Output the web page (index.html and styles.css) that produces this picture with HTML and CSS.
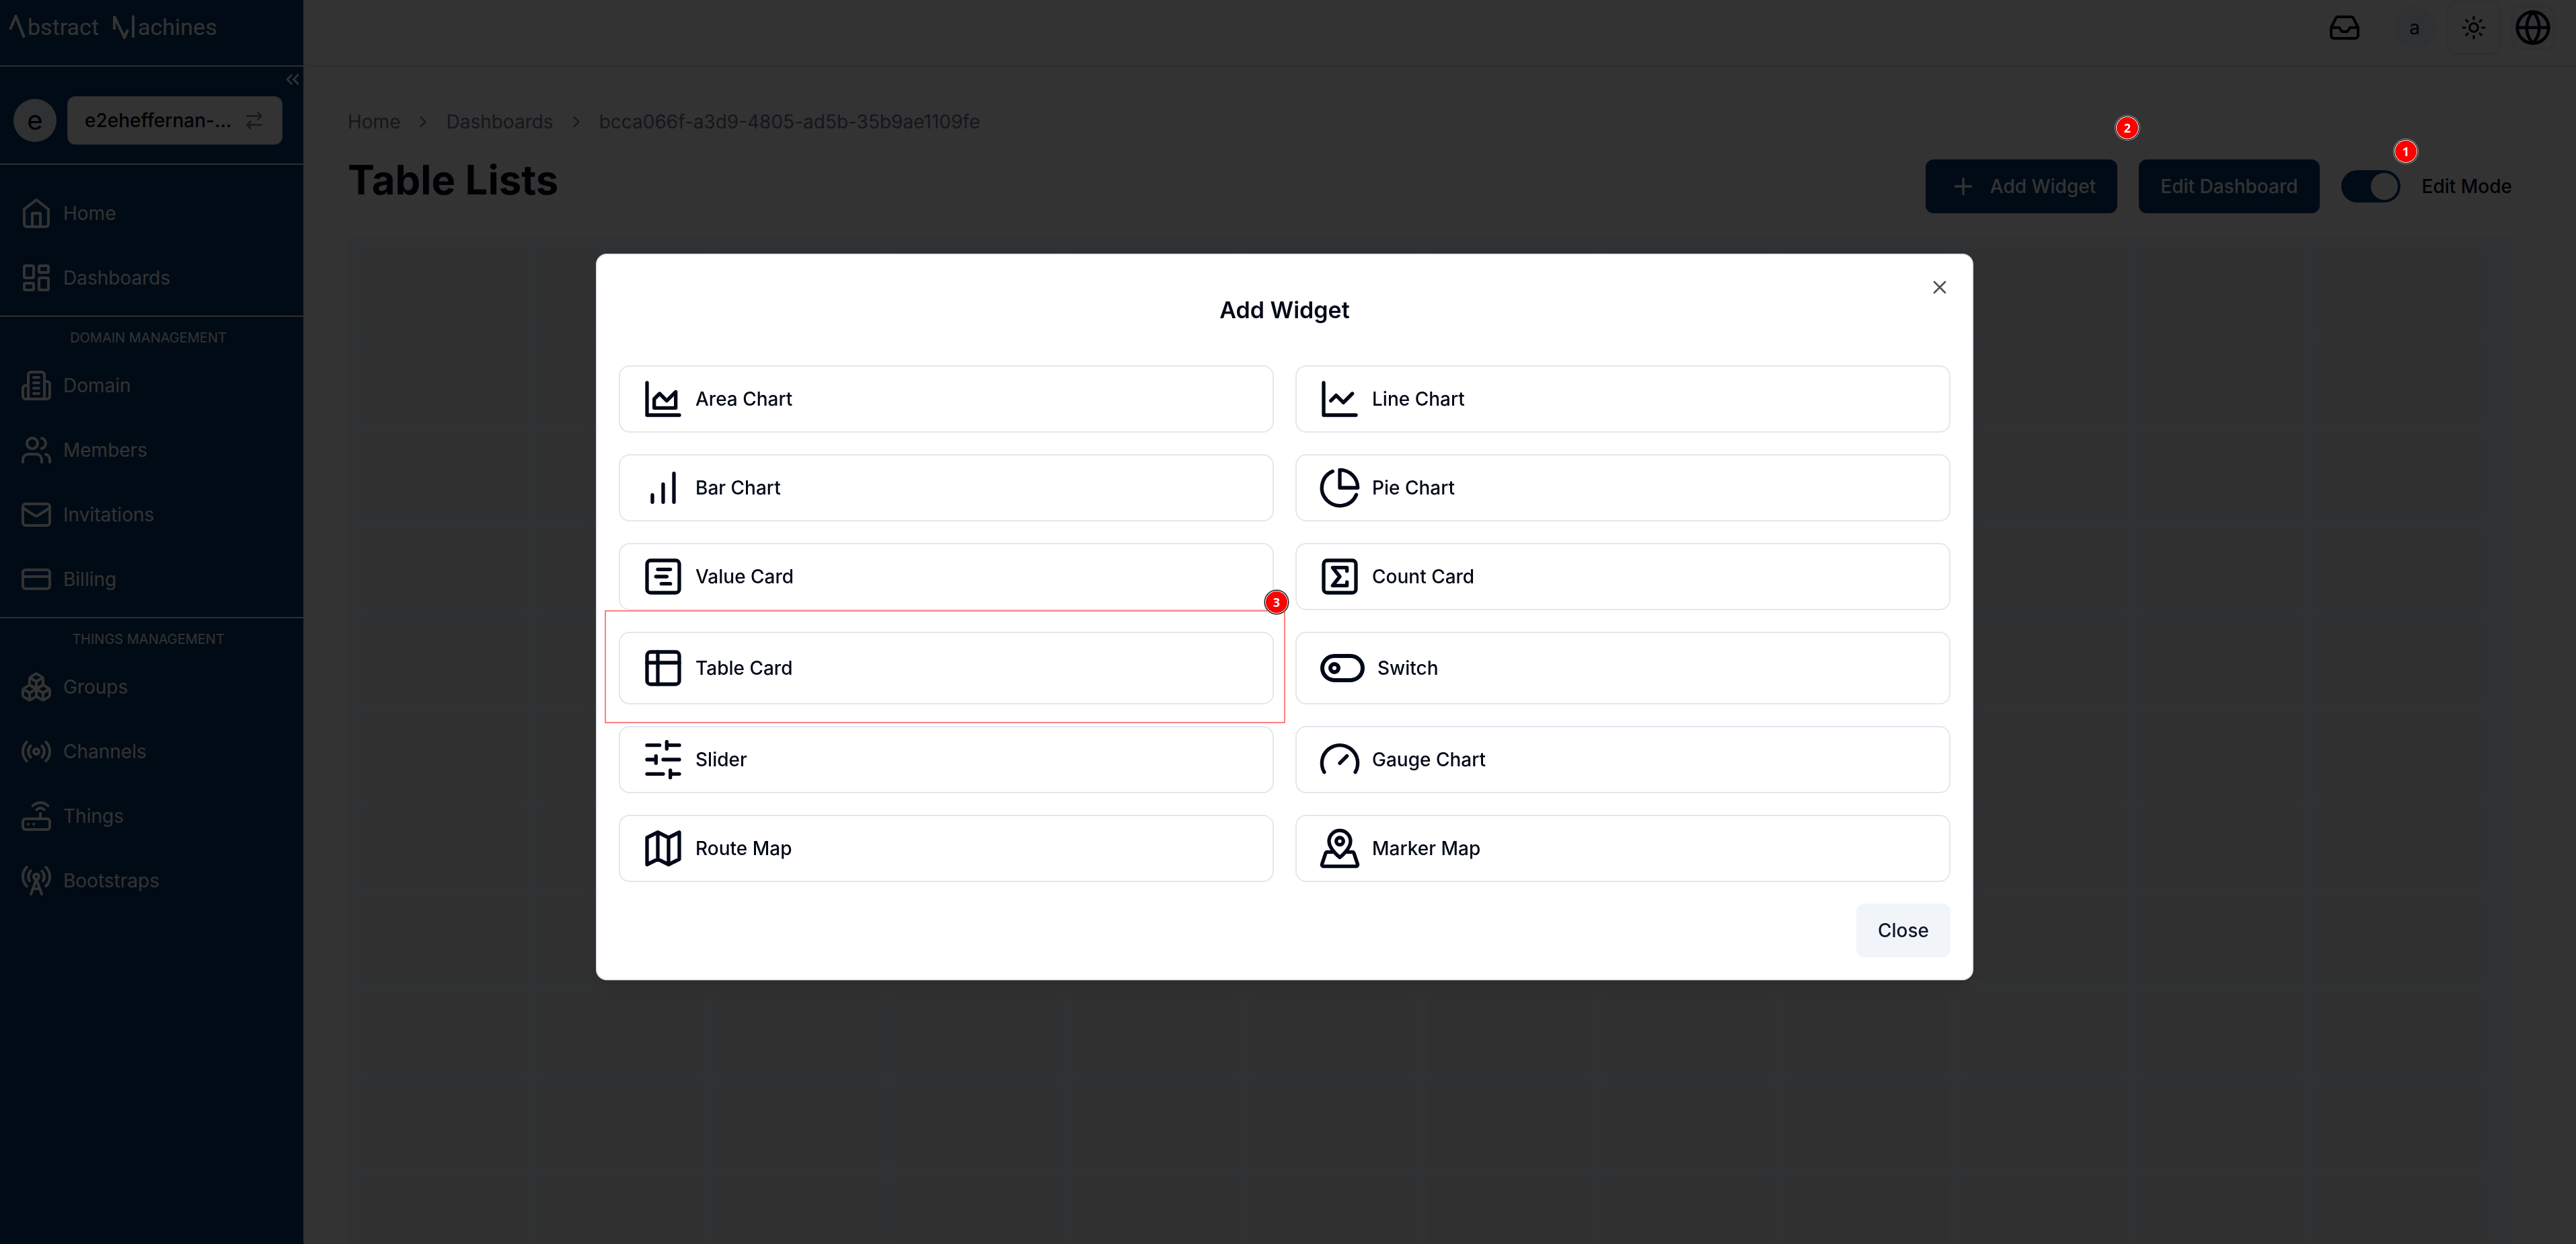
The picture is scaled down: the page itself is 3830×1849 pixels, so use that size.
FILE: index.html
```html
<!DOCTYPE html>
<html lang="en">
<head>
<meta charset="utf-8">
<title>Table Lists - Abstract Machines</title>
<link rel="stylesheet" href="styles.css">
</head>
<body>
<div class="app">
  <aside class="sidebar">
    <div class="brand" role="img" aria-label="Abstract Machines">
      <svg class="brand-a" viewBox="0 0 28 36"><path d="M2 22 10.500 2 23 34"/></svg>
      <span>bstract</span>
      <svg class="brand-m" viewBox="0 0 34 36"><path d="M3 22V2L18 34 23 22M31 1V34"/></svg>
      <span>achines</span>
    </div>
    <div class="workspace">
      <button class="collapse" type="button" aria-label="Collapse sidebar"><svg class="icon" viewBox="0 0 24 24"><path d="m11 17-5-5 5-5M18 17l-5-5 5-5"/></svg></button>
      <span class="avatar avatar-lg">e</span>
      <button class="switcher" type="button"><span>e2eheffernan-...</span><svg class="icon" viewBox="0 0 24 24"><path d="m16 3 4 4-4 4M20 7H4M8 21l-4-4 4-4M4 17h16"/></svg></button>
    </div>
    <nav class="nav">
      <a href="#"><svg class="icon" viewBox="0 0 24 24"><path d="m3 9 9-7 9 7v11a2 2 0 0 1-2 2H5a2 2 0 0 1-2-2z"/><path d="M9 22V12h6v10"/></svg>Home</a>
      <a href="#"><svg class="icon" viewBox="0 0 24 24"><rect width="7" height="9" x="3" y="3" rx="1"/><rect width="7" height="5" x="14" y="3" rx="1"/><rect width="7" height="9" x="14" y="12" rx="1"/><rect width="7" height="5" x="3" y="16" rx="1"/></svg>Dashboards</a>
    </nav>
    <nav class="nav titled">
      <h2>DOMAIN MANAGEMENT</h2>
      <a href="#"><svg class="icon" viewBox="0 0 24 24"><path d="M6 22V4a2 2 0 0 1 2-2h8a2 2 0 0 1 2 2v18Z"/><path d="M6 12H4a2 2 0 0 0-2 2v6a2 2 0 0 0 2 2h2M18 9h2a2 2 0 0 1 2 2v9a2 2 0 0 1-2 2h-2M10 6h4M10 10h4M10 14h4M10 18h4"/></svg>Domain</a>
      <a href="#"><svg class="icon" viewBox="0 0 24 24"><path d="M16 21v-2a4 4 0 0 0-4-4H6a4 4 0 0 0-4 4v2"/><circle cx="9" cy="7" r="4"/><path d="M22 21v-2a4 4 0 0 0-3-3.870M16 3.130a4 4 0 0 1 0 7.750"/></svg>Members</a>
      <a href="#"><svg class="icon" viewBox="0 0 24 24"><rect width="20" height="16" x="2" y="4" rx="2"/><path d="m22 7-8.970 5.700a1.940 1.940 0 0 1-2.060 0L2 7"/></svg>Invitations</a>
      <a href="#"><svg class="icon" viewBox="0 0 24 24"><rect width="20" height="14" x="2" y="5" rx="2"/><path d="M2 10h20"/></svg>Billing</a>
    </nav>
    <nav class="nav titled">
      <h2>THINGS MANAGEMENT</h2>
      <a href="#"><svg class="icon" viewBox="0 0 24 24"><path d="M2.970 12.920A2 2 0 0 0 2 14.630v3.240a2 2 0 0 0 .970 1.710l3 1.800a2 2 0 0 0 2.060 0L12 19v-5.500l-5-3-4.030 2.420Z"/><path d="m7 16.500-4.740-2.850M7 16.500l5-3M7 16.500v5.170"/><path d="M12 13.500V19l3.970 2.380a2 2 0 0 0 2.060 0l3-1.800a2 2 0 0 0 .970-1.710v-3.240a2 2 0 0 0-.970-1.710L17 10.500l-5 3Z"/><path d="m17 16.500-5-3M17 16.500l4.740-2.850M17 16.500v5.170"/><path d="M7.970 4.420A2 2 0 0 0 7 6.130v4.370l5 3 5-3V6.130a2 2 0 0 0-.970-1.710l-3-1.800a2 2 0 0 0-2.060 0l-3 1.800Z"/><path d="M12 8 7.260 5.150M12 8l4.740-2.850M12 13.500V8"/></svg>Groups</a>
      <a href="#"><svg class="icon" viewBox="0 0 24 24"><path d="M4.900 19.100C1 15.200 1 8.800 4.900 4.900M7.800 16.200c-2.300-2.300-2.300-6.100 0-8.500"/><circle cx="12" cy="12" r="2"/><path d="M16.200 7.800c2.300 2.300 2.300 6.100 0 8.500M19.100 4.900C23 8.800 23 15.100 19.100 19"/></svg>Channels</a>
      <a href="#"><svg class="icon" viewBox="0 0 24 24"><rect width="20" height="8" x="2" y="14" rx="2"/><path d="M6.010 18H6M10.010 18H10M15 10v4M17.840 7.170a4 4 0 0 0-5.660 0M20.660 4.340a8 8 0 0 0-11.310 0"/></svg>Things</a>
      <a href="#"><svg class="icon" viewBox="0 0 24 24"><path d="M4.900 16.100C1 12.200 1 5.800 4.900 1.900M7.800 4.700a6.140 6.140 0 0 0-.800 7.500"/><circle cx="12" cy="9" r="2"/><path d="M16.200 4.800c2 2 2.260 5.110.800 7.470M19.100 1.900a9.960 9.960 0 0 1 0 14.100M9.500 18h5M8 22l4-11 4 11"/></svg>Bootstraps</a>
    </nav>
  </aside>

  <div class="page">
    <header class="topbar">
      <button class="plain" type="button" aria-label="Inbox"><svg class="icon" viewBox="0 0 24 24"><path d="M22 12h-6l-2 3h-4l-2-3H2"/><path d="M5.450 5.110 2 12v6a2 2 0 0 0 2 2h16a2 2 0 0 0 2-2v-6l-3.450-6.890A2 2 0 0 0 16.760 4H7.240a2 2 0 0 0-1.790 1.110z"/></svg></button>
      <div class="tools">
        <span class="avatar">a</span>
        <button class="outlined theme" type="button" aria-label="Theme"><svg class="icon" viewBox="0 0 24 24"><circle cx="12" cy="12" r="4"/><path d="M12 2v2M12 20v2M4.930 4.930l1.410 1.410M17.660 17.660l1.410 1.410M2 12h2M20 12h2M6.340 17.660l-1.410 1.410M19.070 4.930l-1.410 1.410"/></svg></button>
        <button class="outlined language" type="button" aria-label="Language"><svg class="icon" viewBox="0 0 24 24"><circle cx="12" cy="12" r="10"/><path d="M12 2a14.500 14.500 0 0 0 0 20 14.500 14.500 0 0 0 0-20M2 12h20"/></svg></button>
      </div>
    </header>
    <main class="main">
      <nav class="crumbs" aria-label="Breadcrumb">
        <a href="#">Home</a>
        <svg class="icon" viewBox="0 0 24 24"><path d="m9 18 6-6-6-6"/></svg>
        <a href="#">Dashboards</a>
        <svg class="icon" viewBox="0 0 24 24"><path d="m9 18 6-6-6-6"/></svg>
        <span>bcca066f-a3d9-4805-ad5b-35b9ae1109fe</span>
      </nav>
      <div class="heading">
        <h1>Table Lists</h1>
        <div class="actions">
          <button class="primary with-icon" type="button"><svg class="icon" viewBox="0 0 24 24"><path d="M5 12h14M12 5v14"/></svg>Add Widget</button>
          <button class="primary" type="button">Edit Dashboard</button>
          <label class="mode"><input type="checkbox" role="switch" checked><span>Edit Mode</span></label>
        </div>
      </div>
      <div class="board" id="board"></div>
    </main>
  </div>
</div>

<div class="overlay">
  <section class="dialog" role="dialog" aria-modal="true" aria-labelledby="dialog-title">
    <button class="dismiss" type="button" aria-label="Dismiss"><svg class="icon" viewBox="0 0 24 24"><path d="M18 6 6 18M6 6l12 12"/></svg></button>
    <h2 class="dialog-title" id="dialog-title">Add Widget</h2>
    <div class="widgets">
      <button class="widget" type="button"><svg class="icon" viewBox="0 0 24 24"><path d="M3 3v18h18"/><path d="M7 12v5h12V8l-5 5-4-4Z"/></svg>Area Chart</button>
      <button class="widget" type="button"><svg class="icon" viewBox="0 0 24 24"><path d="M3 3v18h18"/><path d="m19 9-5 5-4-4-3 3"/></svg>Line Chart</button>
      <button class="widget" type="button"><svg class="icon" viewBox="0 0 24 24"><path d="M12 20V10M18 20V4M6 20v-4"/></svg>Bar Chart</button>
      <button class="widget" type="button"><svg class="icon" viewBox="0 0 24 24"><path d="M21.210 15.890A10 10 0 1 1 8 2.830"/><path d="M22 12A10 10 0 0 0 12 2v10z"/></svg>Pie Chart</button>
      <button class="widget" type="button"><svg class="icon" viewBox="0 0 24 24"><rect width="18" height="18" x="3" y="3" rx="2"/><path d="M9 8h7M8 12h6M11 16h5"/></svg>Value Card</button>
      <button class="widget" type="button"><svg class="icon" viewBox="0 0 24 24"><rect width="18" height="18" x="3" y="3" rx="2"/><path d="M16 8.900V7H8l4 5-4 5h8v-1.900"/></svg>Count Card</button>
      <div class="callout">
        <button class="widget" type="button"><svg class="icon" viewBox="0 0 24 24"><rect width="18" height="18" x="3" y="3" rx="2"/><path d="M3 9h18M9 3v18"/></svg>Table Card</button>
        <span class="frame"></span>
        <span class="marker marker-3">3</span>
      </div>
      <button class="widget wide-icon" type="button"><svg class="icon" viewBox="0 0 24 24"><rect width="20" height="12" x="2" y="6" rx="6"/><circle cx="8" cy="12" r="2"/></svg>Switch</button>
      <button class="widget" type="button"><svg class="icon" viewBox="0 0 24 24"><path d="M21 4h-7M10 4H3M21 12h-9M8 12H3M21 20h-5M12 20H3M14 2v4M8 10v4M16 18v4"/></svg>Slider</button>
      <button class="widget" type="button"><svg class="icon" viewBox="0 0 24 24"><path d="m12 14 4-4"/><path d="M3.340 19a10 10 0 1 1 17.320 0"/></svg>Gauge Chart</button>
      <button class="widget" type="button"><svg class="icon" viewBox="0 0 24 24"><path d="m3 6 6-3 6 3 6-3v15l-6 3-6-3-6 3zM9 3v15M15 6v15"/></svg>Route Map</button>
      <button class="widget" type="button"><svg class="icon" viewBox="0 0 24 24"><path d="M18 8c0 4.500-6 9-6 9s-6-4.500-6-9a6 6 0 0 1 12 0"/><circle cx="12" cy="8" r="2"/><path d="M8.835 14H5a1 1 0 0 0-.900.700l-2 6c-.100.100-.100.200-.100.300 0 .600.400 1 1 1h18c.600 0 1-.400 1-1 0-.100 0-.200-.100-.300l-2-6a1 1 0 0 0-.900-.700h-3.835"/></svg>Marker Map</button>
    </div>
    <div class="dialog-footer"><button class="secondary" type="button">Close</button></div>
  </section>
  <span class="marker marker-2">2</span>
  <span class="marker marker-1">1</span>
</div>
<script src="board.js"></script>
</body>
</html>
```
FILE: board.js
```js
// Fill the dashboard canvas with its empty drop cells.
const board = document.getElementById('board');
for (let i = 0; i < 12 * 11; i += 1) {
  const cell = document.createElement('div');
  cell.className = 'cell';
  board.appendChild(cell);
}
```
FILE: styles.css
```css
:root {
  --primary: #03376e;
  --ink: #020817;
  --line: #e2e8f0;
  --muted: #f1f5f9;
}
* { box-sizing: border-box; }
body {
  margin: 0;
  font: 400 28px/40px Inter, "Liberation Sans", sans-serif;
  color: var(--ink);
  background: #fff;
}
button { font: inherit; color: inherit; background: none; border: 0; padding: 0; margin: 0; }
a { color: inherit; text-decoration: none; }
h1, h2 { margin: 0; }
.icon {
  flex: none;
  display: block;
  width: 48px;
  height: 48px;
  fill: none;
  stroke: currentColor;
  stroke-width: 2;
  stroke-linecap: round;
  stroke-linejoin: round;
}
.app { display: flex; height: 100vh; overflow: hidden; }

/* Sidebar */
.sidebar {
  flex: none;
  width: 453px;
  background: var(--primary);
  border-right: 2px solid var(--line);
  color: #fff;
}
.brand {
  display: flex;
  align-items: center;
  height: 99px;
  padding: 0 0 18px 13px;
  border-bottom: 2px solid var(--line);
  font-family: Roboto, sans-serif;
  font-size: 34px;
}
.brand svg { height: 36px; fill: none; stroke: currentColor; stroke-width: 4; }
.brand-a { width: 28px; }
.brand-m { width: 34px; margin: 0 4px 0 20px; }
.workspace {
  position: relative;
  display: flex;
  align-items: center;
  gap: 16px;
  height: 146px;
  padding: 16px 31px 0 20px;
  border-bottom: 2px solid var(--line);
}
.collapse { position: absolute; top: 3px; right: 0; }
.collapse .icon { width: 32px; height: 32px; }
.avatar {
  flex: none;
  display: grid;
  place-items: center;
  width: 64px;
  height: 64px;
  border-radius: 50%;
  background: var(--muted);
  color: var(--ink);
}
.avatar-lg { font-size: 40px; }
.switcher {
  flex: 1;
  display: flex;
  align-items: center;
  justify-content: space-between;
  height: 72px;
  padding: 0 24px;
  border: 2px solid var(--line);
  border-radius: 12px;
  background: #fff;
  color: var(--ink);
  font-weight: 500;
}
.switcher .icon { width: 32px; height: 32px; opacity: .5; }
.nav { padding: 24px 0 8px; border-bottom: 2px solid var(--line); }
.nav:last-child { border-bottom: 0; }
.nav.titled { padding-top: 16px; }
.nav h2 {
  margin: 0 10px 8px 0;
  font-size: 20px;
  font-weight: 400;
  line-height: 30px;
  text-align: center;
}
.nav a {
  display: flex;
  align-items: center;
  gap: 16px;
  height: 96px;
  padding-left: 30px;
}

/* Page */
.page { flex: 1; min-width: 0; }
.topbar {
  display: flex;
  align-items: center;
  justify-content: flex-end;
  gap: 48px;
  height: 99px;
  padding: 0 32px 16px 0;
  border-bottom: 2px solid var(--line);
}
.tools { display: flex; align-items: center; gap: 16px; }
.outlined {
  display: grid;
  place-items: center;
  border: 2px solid var(--line);
  border-radius: 12px;
}
.theme { width: 80px; height: 80px; }
.theme .icon { width: 38px; height: 38px; }
.language { width: 64px; height: 64px; }
.language .icon { width: 56px; height: 56px; }
.main { padding: 62px 95px 0 64px; }
.crumbs { display: flex; align-items: center; gap: 20px; color: #64748b; }
.crumbs .icon { width: 28px; height: 28px; }
.heading { display: flex; justify-content: space-between; padding-top: 30px; }
h1 { font-size: 60px; line-height: 72px; font-weight: 700; }
.actions { display: flex; align-items: center; gap: 32px; height: 92px; font-weight: 500; }
.primary {
  display: flex;
  align-items: center;
  gap: 20px;
  height: 80px;
  padding: 0 32px;
  border-radius: 12px;
  background: var(--primary);
  color: #fff;
}
.with-icon { padding-left: 36px; }
.with-icon .icon { width: 40px; height: 40px; }
.mode { display: flex; align-items: center; gap: 32px; }
.mode input {
  appearance: none;
  width: 88px;
  height: 48px;
  margin: 0;
  padding: 4px;
  border-radius: 24px;
  background: var(--primary);
}
.mode input::before {
  content: "";
  display: block;
  width: 40px;
  height: 40px;
  margin-left: 40px;
  border-radius: 50%;
  background: #fff;
}
.board {
  display: grid;
  grid-template-columns: repeat(12, 1fr);
  gap: 18px 20px;
  margin-top: 30px;
  padding: 18px 46px 18px 20px;
  background: var(--muted);
}
.cell { height: 120px; background: #f0f0f0; border-radius: 4px; }

/* Dialog */
.overlay {
  position: fixed;
  inset: 0;
  display: grid;
  place-items: center;
  padding: 0 10px 15px 0;
  background: rgba(0, 0, 0, .8);
}
.dialog {
  position: relative;
  width: 100%;
  max-width: 2048px;
  padding: 32px;
  border: 2px solid var(--line);
  border-radius: 16px;
  background: #fff;
  box-shadow: 0 20px 30px -6px rgba(0, 0, 0, .1), 0 8px 12px -8px rgba(0, 0, 0, .1);
}
.dismiss { position: absolute; top: 32px; right: 32px; opacity: .7; }
.dismiss .icon { width: 32px; height: 32px; }
.dialog-title {
  padding: 32px 0;
  margin-bottom: 32px;
  font-size: 34px;
  line-height: 36px;
  font-weight: 600;
  text-align: center;
}
.widgets { display: grid; grid-template-columns: 1fr 1fr; gap: 32px; font-weight: 500; }
.widget {
  display: flex;
  align-items: center;
  gap: 16px;
  width: 100%;
  height: 100%;
  padding: 16px 32px;
  border: 2px solid var(--line);
  border-radius: 16px;
}
.widget .icon { width: 64px; height: 64px; }
.wide-icon .icon { width: 72px; height: 72px; }
.dialog-footer { display: flex; justify-content: flex-end; margin-top: 32px; }
.secondary {
  height: 80px;
  padding: 0 32px;
  border-radius: 12px;
  background: var(--muted);
  color: #0f172a;
  font-weight: 500;
}

/* Numbered annotations */
.callout { position: relative; }
.frame {
  position: absolute;
  inset: -32px -17px -28px -21px;
  border: 2px solid #ff8080;
  pointer-events: none;
}
.marker {
  position: absolute;
  display: grid;
  place-items: center;
  width: 32px;
  height: 32px;
  border-radius: 50%;
  background: #f00;
  box-shadow: 0 0 0 1px #fff, 0 0 0 2px #000, 0 0 0 3px #999;
  color: #fff;
  font: 700 18px/18px "Open Sans", sans-serif;
}
.marker-1 { top: 209px; right: 237px; }
.marker-2 { top: 174px; right: 651px; }
.marker-3 { top: -60px; right: -20px; }
```
